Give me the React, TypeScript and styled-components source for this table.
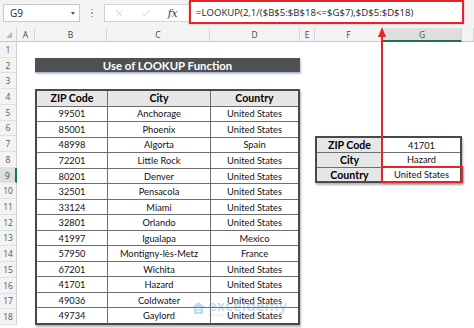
import React from "react";
import styled, { createGlobalStyle, css } from "styled-components";
import { X, Check } from "lucide-react";

const GlobalStyle = createGlobalStyle`
  html, body { margin: 0; padding: 0; background: #fff; }
  body { width: 474px; height: 328px; overflow: hidden; }
`;

const RED = "#e1252b";
const GREEN = "#217346";

const Window = styled.div`
  position: relative;
  width: 474px;
  height: 328px;
  overflow: hidden;
  background: #fff;
  display: flex;
  flex-direction: column;
  font-family: "Open Sans", sans-serif;
`;

const FormulaBar = styled.div`
  flex: none;
  height: 28px;
  box-sizing: border-box;
  background: #f3f3f3;
  display: flex;
  align-items: flex-start;
  padding-left: 3px;
`;

const NameBox = styled.div`
  margin-top: 4px;
  width: 77px;
  height: 18px;
  box-sizing: border-box;
  border: 1px solid #c9c9c9;
  background: #fff;
  display: flex;
  align-items: center;
  justify-content: space-between;
  padding: 0 4px 0 6px;
  font-size: 10px;
  color: #262626;
`;

const Caret = styled.span`
  width: 0;
  height: 0;
  border-left: 2.5px solid transparent;
  border-right: 2.5px solid transparent;
  border-top: 3px solid #555;
`;

const Grip = styled.div`
  width: 24px;
  height: 18px;
  margin-top: 4px;
  display: flex;
  flex-direction: column;
  align-items: center;
  justify-content: center;
  gap: 2px;
`;

const GripDot = styled.span`
  width: 1.5px;
  height: 1.5px;
  background: #a8a8a8;
`;

const FnBox = styled.div`
  margin-top: 4px;
  width: 85px;
  height: 18px;
  box-sizing: border-box;
  border: 1px solid #d2d2d2;
  border-right: none;
  background: #fff;
  display: grid;
  grid-template-columns: 28px 25px 1fr;
  align-items: center;
  justify-items: center;
  color: #a9a9a9;
`;

const Fx = styled.span`
  font-family: "DejaVu Serif", "Liberation Serif", serif;
  font-style: italic;
  font-size: 11px;
  color: #3a3a3a;
  letter-spacing: -0.5px;
  padding-right: 2px;
`;

const FormulaInput = styled.div`
  width: 275px;
  height: 24px;
  box-sizing: border-box;
  border: 2.5px solid ${RED};
  box-shadow: 0 0 2px rgba(225, 37, 43, 0.4);
  background: #fff;
  display: flex;
  align-items: center;
  padding-left: 5px;
  font-size: 9.6px;
  color: #262626;
  white-space: nowrap;
`;

const Sheet = styled.div`
  flex: none;
  display: grid;
  grid-template-columns: 17px 18px 72px 103px 90px 15px 68px 79px 1fr;
  grid-template-rows: 14px repeat(18, 15.72px);
`;

const Corner = styled.div`
  grid-column: 1;
  grid-row: 1;
  background: #f3f3f3;
  border-right: 1px solid #d4d4d4;
  border-bottom: 1px solid #c9c9c9;
  box-sizing: border-box;
  position: relative;
  &::after {
    content: "";
    position: absolute;
    right: 4px;
    bottom: 3px;
    border-left: 6px solid transparent;
    border-bottom: 6px solid #b9b9b9;
  }
`;

const ColHead = styled.div<{ $active?: boolean }>`
  grid-row: 1;
  box-sizing: border-box;
  background: #f3f3f3;
  border-right: 1px solid #d6d6d6;
  border-bottom: 1px solid #c9c9c9;
  display: flex;
  align-items: center;
  justify-content: center;
  font-size: 8.5px;
  color: #444;
  ${(p) =>
    p.$active &&
    css`
      background: #dedede;
      border-bottom: 2px solid ${GREEN};
      color: #2d5f43;
    `}
`;

const RowHead = styled.div<{ $row: number; $active?: boolean }>`
  grid-column: 1;
  grid-row: ${(p) => p.$row + 1};
  box-sizing: border-box;
  background: #f3f3f3;
  border-right: 1px solid #d0d0d0;
  border-bottom: 1px solid #e0e0e0;
  display: flex;
  align-items: center;
  justify-content: center;
  font-size: 8.5px;
  color: #555;
  ${(p) =>
    p.$active &&
    css`
      background: #dedede;
      border-right: 2px solid ${GREEN};
      color: #2d5f43;
    `}
`;

const TitleBar = styled.div`
  grid-column: 3 / 6;
  grid-row: 3;
  background: #505050;
  border-bottom: 1px solid #a8bad3;
  box-shadow: 1px 1px 2px rgba(0, 0, 0, 0.25);
  display: flex;
  align-items: center;
  justify-content: center;
  font-family: "Lato", sans-serif;
  font-weight: 700;
  font-size: 11.4px;
  color: #fff;
`;

const Table = styled.div<{ $cols: string; $col: string; $row: string }>`
  grid-column: ${(p) => p.$col};
  grid-row: ${(p) => p.$row};
  display: grid;
  grid-template-columns: ${(p) => p.$cols};
  grid-auto-rows: 1fr;
  gap: 1px;
  background: #6e6e6e;
  border: 2px solid #4a4a4a;
  box-shadow: 1px 2px 2px rgba(0, 0, 0, 0.3);
  font-family: "Lato", sans-serif;
  color: #111;
`;

const Cell = styled.div<{ $kind?: "head" | "label" | "body"; $highlight?: boolean }>`
  position: relative;
  display: flex;
  align-items: center;
  justify-content: center;
  background: #fff;
  font-size: 9.3px;
  white-space: nowrap;
  ${(p) =>
    (p.$kind === "head" || p.$kind === "label") &&
    css`
      background: #e8e7e7;
      font-weight: 700;
      font-size: 10.6px;
      color: #000;
    `}
  ${(p) =>
    p.$highlight &&
    css`
      &::after {
        content: "";
        position: absolute;
        inset: -2px -3px -2px -2px;
        border: 2.5px solid ${RED};
        box-shadow: 1px 1px 2px rgba(0, 0, 0, 0.25);
      }
    `}
`;

const Annotation = styled.svg`
  position: absolute;
  left: 0;
  top: 0;
  pointer-events: none;
`;

const Watermark = styled.div`
  position: absolute;
  left: 192px;
  top: 298px;
  display: flex;
  align-items: center;
  gap: 3px;
  opacity: 0.4;
  pointer-events: none;
`;

const WmText = styled.div`
  display: flex;
  flex-direction: column;
  line-height: 1;
`;

const WmName = styled.span`
  font-family: "Open Sans", sans-serif;
  font-size: 15px;
  font-weight: 600;
  color: #6d9fcf;
  letter-spacing: 0.2px;
`;

const WmTag = styled.span`
  font-family: "Open Sans", sans-serif;
  font-size: 3.6px;
  color: #7fa6cc;
  letter-spacing: 0.6px;
  margin-top: 1px;
`;

const COLS = ["A", "B", "C", "D", "E", "F", "G", "H"];

const DATA: [string, string, string][] = [
  ["99501", "Anchorage", "United States"],
  ["85001", "Phoenix", "United States"],
  ["48998", "Algorta", "Spain"],
  ["72201", "Little Rock", "United States"],
  ["80201", "Denver", "United States"],
  ["32501", "Pensacola", "United States"],
  ["33124", "Miami", "United States"],
  ["32801", "Orlando", "United States"],
  ["41997", "Igualapa", "Mexico"],
  ["57950", "Montigny-lès-Metz", "France"],
  ["67201", "Wichita", "United States"],
  ["41701", "Hazard", "United States"],
  ["49036", "Coldwater", "United States"],
  ["49734", "Gaylord", "United States"],
];

const LOOKUP: [string, string][] = [
  ["ZIP Code", "41701"],
  ["City", "Hazard"],
  ["Country", "United States"],
];

export default function App() {
  return (
    <Window>
      <GlobalStyle />
      <FormulaBar>
        <NameBox>
          <span>G9</span>
          <Caret />
        </NameBox>
        <Grip>
          <GripDot />
          <GripDot />
          <GripDot />
        </Grip>
        <FnBox>
          <X size={11} strokeWidth={1.2} />
          <Check size={11} strokeWidth={1.2} />
          <Fx>fx</Fx>
        </FnBox>
        <FormulaInput>=LOOKUP(2,1/($B$5:$B$18&lt;=$G$7),$D$5:$D$18)</FormulaInput>
      </FormulaBar>

      <Sheet>
        <Corner />
        {COLS.map((c) => (
          <ColHead key={c} $active={c === "G"}>
            {c === "H" ? "" : c}
          </ColHead>
        ))}
        {Array.from({ length: 18 }, (_, i) => (
          <RowHead key={i} $row={i + 1} $active={i + 1 === 9}>
            {i + 1}
          </RowHead>
        ))}

        <TitleBar>Use of LOOKUP Function</TitleBar>

        <Table $cols="70px 102px 1fr" $col="3 / 6" $row="5 / 20">
          <Cell $kind="head">ZIP Code</Cell>
          <Cell $kind="head">City</Cell>
          <Cell $kind="head">Country</Cell>
          {DATA.map((r) =>
            r.map((v, j) => <Cell key={r[0] + j}>{v}</Cell>)
          )}
        </Table>

        <Table $cols="65px 1fr" $col="7 / 9" $row="8 / 11">
          {LOOKUP.map(([k, v]) => (
            <React.Fragment key={k}>
              <Cell $kind="label">{k}</Cell>
              <Cell $highlight={k === "Country"}>{v}</Cell>
            </React.Fragment>
          ))}
        </Table>
      </Sheet>

      <Annotation width={474} height={328} viewBox="0 0 474 328">
        <rect x={381} y={35} width={2} height={133} fill={RED} />
        <polygon points="382,27 378,37 386,37" fill={RED} />
      </Annotation>

      <Watermark>
        <svg width="13" height="12" viewBox="0 0 13 12">
          <path d="M6.5 0 L13 5 L11 5 L11 12 L2 12 L2 5 L0 5 Z" fill="#6d9fcf" />
          <path d="M4 7 L9 7 M4 9.5 L9 9.5" stroke="#fff" strokeWidth="1.2" />
        </svg>
        <WmText>
          <WmName>exceldemy</WmName>
          <WmTag>EXPERT · DATA · ANALYSIS</WmTag>
        </WmText>
      </Watermark>
    </Window>
  );
}
